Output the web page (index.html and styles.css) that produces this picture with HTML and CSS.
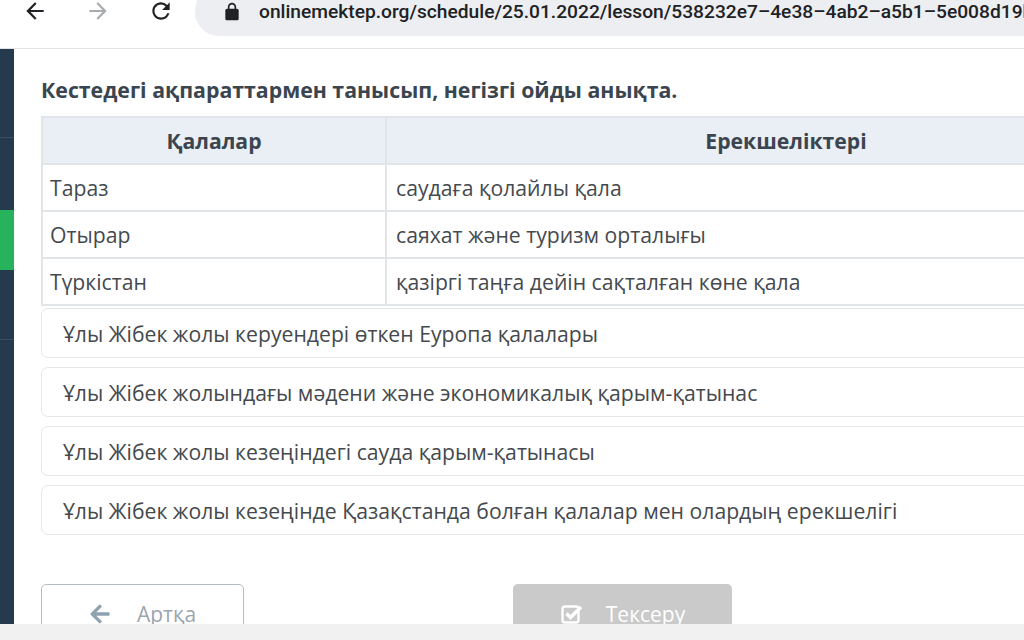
FILE: index.html
```html
<!DOCTYPE html>
<html lang="kk">
<head>
<meta charset="utf-8">
<link rel="stylesheet" href="styles.css">
</head>
<body>
<div class="toolbar">
  <div class="navs">
    <svg class="nav" viewBox="0 0 24 24" width="26" height="26"><path d="M20 11H7.830l5.590-5.590L12 4l-8 8 8 8 1.410-1.410L7.830 13H20v-2z" fill="#202124"/></svg>
    <svg class="nav" viewBox="0 0 24 24" width="26" height="26"><path d="M12 4l-1.410 1.410L16.170 11H4v2h12.170l-5.580 5.590L12 20l8-8z" fill="#a8abaf"/></svg>
    <svg class="nav" viewBox="0 0 24 24" width="26" height="26"><path d="M17.650 6.350A7.958 7.958 0 0 0 12 4c-4.420 0-7.990 3.580-7.990 8s3.570 8 7.990 8c3.730 0 6.840-2.550 7.730-6h-2.080A5.990 5.990 0 0 1 12 18c-3.310 0-6-2.690-6-6s2.690-6 6-6c1.660 0 3.140.690 4.220 1.780L13 11h7V4l-2.350 2.350z" fill="#202124"/></svg>
  </div>
  <div class="omnibox">
    <svg class="lock" viewBox="0 0 24 24" width="20" height="20"><path d="M18 8h-1V6c0-2.760-2.240-5-5-5S7 3.240 7 6v2H6c-1.100 0-2 .900-2 2v10c0 1.100.900 2 2 2h12c1.100 0 2-.900 2-2V10c0-1.100-.900-2-2-2zM9 6c0-1.660 1.340-3 3-3s3 1.340 3 3v2H9V6z" fill="#202124"/></svg>
    <span class="url">onlinemektep.org/schedule/25.01.2022/lesson/538232e7–4e38–4ab2–a5b1–5e008d19b</span>
  </div>
</div>
<div class="main">
  <div class="sidebar">
    <div class="sb-item"></div>
    <div class="sb-item sb-sep"></div>
    <div class="sb-item sb-active"></div>
    <div class="sb-item sb-sep2"></div>
  </div>
  <div class="content">
    <h1 class="question">Кестедегі ақпараттармен танысып, негізгі ойды анықта.</h1>
    <table class="info">
      <thead>
        <tr><th class="c1">Қалалар</th><th class="c2">Ерекшеліктері</th></tr>
      </thead>
      <tbody>
        <tr><td>Тараз</td><td>саудаға қолайлы қала</td></tr>
        <tr><td>Отырар</td><td>саяхат және туризм орталығы</td></tr>
        <tr><td>Түркістан</td><td>қазіргі таңға дейін сақталған көне қала</td></tr>
      </tbody>
    </table>
    <div class="options">
      <div class="option">Ұлы Жібек жолы керуендері өткен Еуропа қалалары</div>
      <div class="option">Ұлы Жібек жолындағы мәдени және экономикалық қарым-қатынас</div>
      <div class="option">Ұлы Жібек жолы кезеңіндегі сауда қарым-қатынасы</div>
      <div class="option">Ұлы Жібек жолы кезеңінде Қазақстанда болған қалалар мен олардың ерекшелігі</div>
    </div>
    <div class="actions">
      <button class="btn btn-back">
        <svg viewBox="0 0 448 512" width="22" height="22"><path d="M257.500 445.100l-22.200 22.200c-9.400 9.400-24.600 9.400-33.900 0L7 273c-9.400-9.400-9.400-24.600 0-33.900L201.400 44.700c9.400-9.400 24.600-9.400 33.900 0l22.200 22.200c9.500 9.500 9.300 25-.400 34.300L136.600 216H424c13.300 0 24 10.700 24 24v32c0 13.300-10.700 24-24 24H136.600l120.500 114.800c9.800 9.300 10 24.800.400 34.300z" fill="#8fa2b0"/></svg>
        <span>Артқа</span>
      </button>
      <button class="btn btn-check">
        <svg viewBox="0 0 24 24" width="24" height="24"><rect x="2.500" y="4.500" width="16" height="16" rx="2.500" fill="none" stroke="#fff" stroke-width="2.400"/><path d="M6.500 11.500l4 4L21 5" fill="none" stroke="#fff" stroke-width="3.400"/></svg>
        <span>Тексеру</span>
      </button>
    </div>
  </div>
</div>
<div class="bottombar"></div>
</body>
</html>
```

FILE: styles.css
```css
* { box-sizing: border-box; }
html, body { margin: 0; padding: 0; }
body {
  width: 1024px;
  height: 640px;
  overflow: hidden;
  background: #fff;
  font-family: "Open Sans", "DejaVu Sans", sans-serif;
  color: #444;
}
.toolbar {
  height: 49px;
  border-bottom: 1px solid #e2e3e5;
  display: flex;
  align-items: flex-start;
  background: #fff;
  overflow: hidden;
}
.navs {
  display: flex;
  align-items: center;
  height: 22px;
  padding-left: 22px;
  gap: 37px;
  width: 195px;
  flex-shrink: 0;
}
.nav { display: block; }
.omnibox {
  margin-top: -13px;
  height: 49px;
  flex: 1;
  background: #eceef1;
  border-radius: 24px 0 0 24px;
  display: flex;
  align-items: center;
  padding-left: 27px;
  white-space: nowrap;
  overflow: hidden;
}
.lock { display: block; flex-shrink: 0; }
.url {
  margin-left: 17px;
  font-family: Roboto, "Liberation Sans", sans-serif;
  font-weight: 500;
  font-size: 19.2px;
  color: #202124;
  overflow: hidden;
  white-space: nowrap;
}
.main {
  display: flex;
  height: 575px;
  overflow: hidden;
}
.sidebar {
  width: 14px;
  flex-shrink: 0;
  background: #263a4e;
  display: flex;
  flex-direction: column;
}
.sb-item { height: 89px; border-bottom: 1px solid #3b4e61; }
.sb-sep { height: 72px; border-bottom: none; }
.sb-active { height: 60px; background: #27b35b; border-bottom: none; }
.sb-sep2 { height: 70px; }
.content {
  padding-left: 27px;
  padding-top: 27px;
  flex-shrink: 0;
}
.question {
  margin: 0;
  font-size: 21.3px;
  font-weight: 700;
  line-height: 28px;
  color: #3b4550;
  height: 40px;
}
.info {
  width: 1146px;
  border-collapse: collapse;
  font-size: 21.2px;
  color: #454a4f;
}
.info th, .info td {
  border: 2px solid #e1e5e8;
  height: 47px;
  padding: 0 9px;
  text-align: left;
}
.info td:first-child { padding-left: 7px; }
.info th {
  background: #e9eff4;
  text-align: center;
  font-weight: 700;
  color: #3b4550;
}
.info .c1 { width: 344px; }
.options {
  margin-top: 2px;
  width: 1146px;
}
.option {
  height: 50px;
  margin-bottom: 9px;
  border: 1px solid #e4e6e8;
  border-radius: 7px;
  padding-left: 21px;
  display: flex;
  align-items: center;
  font-size: 21.2px;
  color: #45494d;
}
.actions {
  margin-top: 49px;
  display: flex;
  gap: 269px;
}
.btn {
  height: 56px;
  border-radius: 5px;
  display: flex;
  align-items: center;
  justify-content: center;
  font-family: "Open Sans", "DejaVu Sans", sans-serif;
  font-size: 21px;
  padding: 4px 0 0 0;
}
.btn svg { display: block; }
.btn-back {
  width: 203px;
  gap: 26px;
  background: #fff;
  border: 1px solid #b3bec4;
  color: #9ba5ad;
}
.btn-check {
  width: 219px;
  gap: 22px;
  background: #cacaca;
  border: none;
  color: #fff;
}
.bottombar {
  height: 16px;
  background: #f1f1f1;
}
```
